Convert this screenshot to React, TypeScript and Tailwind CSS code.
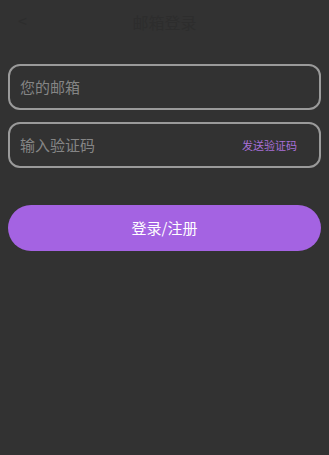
export default function App() {
  return (
    <div
      className="min-h-[455px] w-full bg-[#323232] px-2"
      style={{ fontFamily: '"Noto Sans CJK SC", "Noto Sans", sans-serif' }}
    >
      <div className="relative flex h-[44px] items-center justify-center">
        <span className="absolute left-[10px] top-[12px] text-[16px] leading-none text-[#2d2d2d]">
          &lt;
        </span>
        <span className="text-[16px] text-[#2d2d2d]">邮箱登录</span>
      </div>
      <div className="mt-[20px] flex h-[46px] items-center rounded-[12px] border-2 border-[#9a9a9a] px-[10px]">
        <span className="text-[15px] text-[#858585]">您的邮箱</span>
      </div>
      <div className="mt-[12px] flex h-[46px] items-center justify-between rounded-[12px] border-2 border-[#9a9a9a] pl-[10px] pr-[22px]">
        <span className="text-[15px] text-[#858585]">输入验证码</span>
        <span className="text-[11px] text-[#a870d8]">发送验证码</span>
      </div>
      <button
        type="button"
        className="mt-[37px] flex h-[46px] w-full items-center justify-center rounded-full bg-[#a463e2] text-[15px] text-white"
      >
        登录/注册
      </button>
    </div>
  );
}
